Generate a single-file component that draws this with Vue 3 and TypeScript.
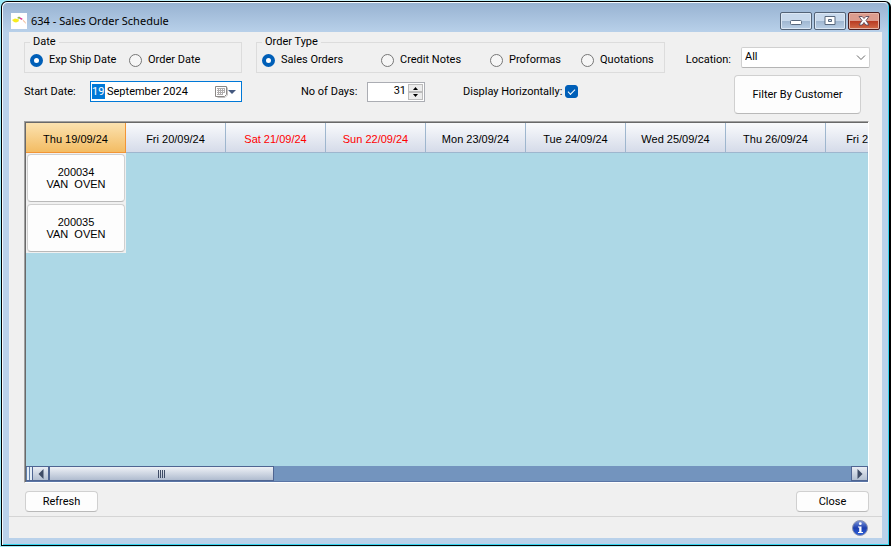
<script setup lang="ts">
import { computed, onBeforeUnmount, onMounted, ref } from 'vue'

interface Order {
  id: string
  customer: string
}

interface Day {
  label: string
  weekend: boolean
  orders: Order[]
}

const COLUMN = 100

const dateMode = ref('ship')
const orderType = ref('sales')
const location = ref('All')
const startDay = ref('19')
const startMonth = ref('September 2024')
const dayCount = ref(31)
const horizontal = ref(true)
const selected = ref('Thu 19/09/24')
const viewport = ref<HTMLElement | null>(null)
const columns = ref(9)
const first = ref(0)

const orderTypes = [
  { value: 'sales', label: 'Sales Orders' },
  { value: 'credit', label: 'Credit Notes' },
  { value: 'proforma', label: 'Proformas' },
  { value: 'quote', label: 'Quotations' },
]

const names = ['Sun', 'Mon', 'Tue', 'Wed', 'Thu', 'Fri', 'Sat']
const pad = (n: number) => String(n).padStart(2, '0')

const days = computed<Day[]>(() =>
  Array.from({ length: dayCount.value }, (_, i) => {
    const d = new Date(2024, 8, 19 + i)
    return {
      label: `${names[d.getDay()]} ${pad(d.getDate())}/${pad(d.getMonth() + 1)}/${pad(d.getFullYear() % 100)}`,
      weekend: d.getDay() === 0 || d.getDay() === 6,
      orders:
        i === 0
          ? [
              { id: '200034', customer: 'VAN  OVEN' },
              { id: '200035', customer: 'VAN  OVEN' },
            ]
          : [],
    }
  }),
)

// Only the columns that fit the viewport are rendered.
const visible = computed(() => days.value.slice(first.value, first.value + columns.value))

const thumb = computed(() => {
  const total = dayCount.value + 1
  return {
    width: Math.min(100, Math.round((columns.value / total) * 100)) + '%',
    marginLeft: Math.round((first.value / total) * 100) + '%',
  }
})

function step(n: number) {
  dayCount.value = Math.max(1, dayCount.value + n)
}

function scroll(n: number) {
  const last = Math.max(0, dayCount.value - columns.value + 1)
  first.value = Math.min(last, Math.max(0, first.value + n))
}

let observer: ResizeObserver | undefined

onMounted(() => {
  observer = new ResizeObserver(() => {
    if (viewport.value) columns.value = Math.ceil(viewport.value.clientWidth / COLUMN)
  })
  if (viewport.value) observer.observe(viewport.value)
})

onBeforeUnmount(() => observer?.disconnect())
</script>

<template>
  <div class="desktop">
    <div class="window">
      <header class="titlebar">
        <svg class="logo" width="16" height="16" viewBox="0 0 16 16" aria-hidden="true">
          <rect width="16" height="16" fill="#fff" />
          <path d="M1 7L4 5.500 6 6l2 .5-.5 2L5 9.500 3 9z" fill="#f6ec1e" />
          <path d="M6 5l2-1.500 1.500 1-1 1.500z" fill="#8fb44e" />
          <path d="M9 4.500l2.500 1-.5 1.500-2-1z" fill="#e0389a" />
          <path d="M11.500 6l3 3 .5 2-3-3z" fill="#f3c2a2" />
        </svg>
        <h1>634 - Sales Order Schedule</h1>
        <div class="caption-buttons">
          <button type="button" aria-label="Minimize">
            <svg width="12" height="12" viewBox="0 0 12 12"><rect x=".5" y="5.500" width="11" height="4" rx="1" fill="#fff" stroke="#58687d" /></svg>
          </button>
          <button type="button" aria-label="Maximize">
            <svg width="12" height="12" viewBox="0 0 12 12"><path d="M1 1.500h10v8H1zM4.500 4.500h3v2h-3z" fill="#fff" fill-rule="evenodd" stroke="#58687d" /></svg>
          </button>
          <button type="button" class="shut" aria-label="Close window">
            <svg width="12" height="12" viewBox="0 0 12 12"><path d="M1 1.500h3.200L6 3.500l1.800-2H11L8 5.500l3 4.500H7.800L6 7.500 4.200 10H1l3-4.500z" fill="#fff" stroke="#58485a" stroke-width=".9" /></svg>
          </button>
        </div>
      </header>

      <main class="client">
        <section class="controls">
          <div class="options">
            <div class="groups">
              <fieldset class="date-group">
                <legend>Date</legend>
                <div class="radios two">
                  <label><input v-model="dateMode" type="radio" name="mode" value="ship" />Exp Ship Date</label>
                  <label><input v-model="dateMode" type="radio" name="mode" value="order" />Order Date</label>
                </div>
              </fieldset>
              <fieldset class="type-group">
                <legend>Order Type</legend>
                <div class="radios four">
                  <label v-for="t in orderTypes" :key="t.value">
                    <input v-model="orderType" type="radio" name="type" :value="t.value" />{{ t.label }}
                  </label>
                </div>
              </fieldset>
            </div>

            <div class="fields">
              <label class="start-label" for="start-day">Start Date:</label>
              <div class="datebox">
                <input id="start-day" v-model="startDay" class="day" type="text" />
                <input v-model="startMonth" class="month" type="text" aria-label="Start month" />
                <button type="button" aria-label="Open calendar">
                  <svg width="22" height="14" viewBox="0 0 22 14">
                    <path d="M2.500 12.500h7.500l2.500-2.500V2.500" fill="none" stroke="#c4c2c2" />
                    <path d="M.5 1.500h11v8l-2 2h-9z" fill="#fff" stroke="#8b8886" />
                    <path d="M2 3.500h8M2 5.500h8M2 7.500h8M2 9.500h6M3.500 3v7M5.500 3v7M7.500 3v7M9.500 3v5" stroke="#b0adad" fill="none" />
                    <path d="M13 5h8l-4 4z" fill="#44597f" />
                  </svg>
                </button>
              </div>
              <label class="days-label" for="days">No of Days:</label>
              <div class="spinbox">
                <input id="days" v-model.number="dayCount" type="text" />
                <div class="spin">
                  <button type="button" aria-label="More days" @click="step(1)">
                    <svg width="7" height="4" viewBox="0 0 7 4"><path d="M1 4l2.500-3L6 4z" fill="#000" /></svg>
                  </button>
                  <button type="button" aria-label="Fewer days" @click="step(-1)">
                    <svg width="7" height="4" viewBox="0 0 7 4"><path d="M1 0l2.500 3L6 0z" fill="#000" /></svg>
                  </button>
                </div>
              </div>
              <label class="check"><span>Display Horizontally:</span><input v-model="horizontal" type="checkbox" /></label>
            </div>
          </div>

          <div class="filters">
            <div class="location">
              <label for="location">Location:</label>
              <div class="select">
                <select id="location" v-model="location">
                  <option>All</option>
                </select>
                <svg width="10" height="6" viewBox="0 0 10 6" aria-hidden="true"><path d="M1 .5L5 4.500 9 .5" fill="none" stroke="#666" /></svg>
              </div>
            </div>
            <button type="button" class="button filter">Filter By Customer</button>
          </div>
        </section>

        <section class="schedule">
          <div ref="viewport" class="viewport">
            <table>
              <thead>
                <tr>
                  <th
                    v-for="d in visible"
                    :key="d.label"
                    :class="{ weekend: d.weekend, active: d.label === selected }"
                    @click="selected = d.label"
                  >
                    {{ d.label }}
                  </th>
                </tr>
              </thead>
              <tbody>
                <tr>
                  <td v-for="d in visible" :key="d.label">
                    <div v-for="o in d.orders" :key="o.id" class="slot">
                      <button type="button" class="button order">{{ o.id }}<br />{{ o.customer }}</button>
                    </div>
                  </td>
                </tr>
              </tbody>
            </table>
          </div>
          <div class="scrollbar">
            <span class="splitter"></span>
            <button type="button" aria-label="Scroll left" @click="scroll(-1)">
              <svg width="6" height="10" viewBox="0 0 6 10"><path d="M5.500 0v10L.5 5z" fill="#3f4c66" /></svg>
            </button>
            <div class="track">
              <div class="thumb" :style="thumb"><i></i><i></i><i></i><i></i></div>
            </div>
            <button type="button" aria-label="Scroll right" @click="scroll(1)">
              <svg width="6" height="10" viewBox="0 0 6 10"><path d="M.5 0v10l5-5z" fill="#3f4c66" /></svg>
            </button>
          </div>
        </section>

        <div class="actions">
          <button type="button" class="button">Refresh</button>
          <button type="button" class="button">Close</button>
        </div>

        <footer class="status">
          <svg width="16" height="16" viewBox="0 0 16 16" role="img" aria-label="Information">
            <defs>
              <linearGradient id="info" x1="0" y1="0" x2="0" y2="1">
                <stop offset="0" stop-color="#7f98dc" />
                <stop offset=".5" stop-color="#1d3fae" />
                <stop offset="1" stop-color="#2f62dd" />
              </linearGradient>
            </defs>
            <circle cx="8" cy="8" r="7.500" fill="url(#info)" stroke="#8b93ad" />
            <circle cx="8.300" cy="3.700" r="1.400" fill="#fff" />
            <path d="M6 6.500h3.500v5.500H11V13H6v-1h1.200V7.500H6z" fill="#fff" />
          </svg>
        </footer>
      </main>
    </div>
  </div>
</template>

<style>
body {
  margin: 0;
}
</style>

<style scoped>
* {
  box-sizing: border-box;
}

.desktop {
  height: 100vh;
  padding: 1px 0 1px 1px;
  background: linear-gradient(90deg, #9beaf8, #d8f6fb 30%, #b5eef8 60%, #e6fafc);
  font: 11px/14px Roboto, 'Liberation Sans', Arial, sans-serif;
  color: #000;
}

.window {
  display: flex;
  flex-direction: column;
  height: 100%;
  border: solid #000;
  border-width: 1px 2px 1px 1px;
  border-radius: 6px 6px 0 0;
  background: #b9d1ea;
  box-shadow: inset 1px 1px #f4f9fd, inset -1px -1px #35d3ee;
  padding: 0 7px 7px;
}

.titlebar {
  display: flex;
  align-items: center;
  gap: 4px;
  height: 30px;
  flex: none;
  margin: 1px -6px -1px;
  padding: 5px 8px 0;
  background: linear-gradient(#98b3d2, #b9d1ea);
  border-radius: 5px 5px 0 0;
}

h1 {
  margin: 0;
  font: 11px/16px 'Noto Sans', sans-serif;
}

.caption-buttons {
  display: flex;
  gap: 2px;
  margin-left: auto;
}

.caption-buttons button {
  display: flex;
  align-items: center;
  justify-content: center;
  width: 32px;
  height: 18px;
  padding: 0;
  border: 1px solid #536377;
  border-radius: 2px;
  background: linear-gradient(#c8d9ec 50%, #9fb6d0 50%, #b9cfe6);
  box-shadow: inset 0 0 0 1px #dbe7f4;
}

.caption-buttons .shut {
  border-color: #4a1e20;
  background: linear-gradient(#dc9c8e 50%, #b83a22 50%, #d26c4a);
  box-shadow: inset 0 0 0 1px #e6b6a8;
}

.client {
  display: flex;
  flex-direction: column;
  flex: 1;
  min-height: 0;
  background: #f0f0f0;
}

.controls {
  display: flex;
  justify-content: space-between;
  padding: 3px 12px 0 15px;
  height: 89px;
  flex: none;
}

.groups {
  display: flex;
  gap: 14px;
}

fieldset {
  margin: 0;
  padding: 0 5px;
  border: 1px solid #dcdcdc;
  height: 38px;
  min-width: 0;
}

.date-group {
  width: 218px;
}

.type-group {
  width: 409px;
}

legend {
  padding: 0 3px;
}

.radios {
  display: grid;
  padding-top: 4px;
}

.two {
  grid-template-columns: 99px auto;
}

.four {
  grid-template-columns: 119px 109px 91px auto;
}

.radios label {
  display: flex;
  align-items: center;
  gap: 6px;
  white-space: nowrap;
}

input[type='radio'] {
  appearance: none;
  flex: none;
  width: 13px;
  height: 13px;
  margin: 0;
  border: 1px solid #767676;
  border-radius: 50%;
  background: #f6f6f6;
}

input[type='radio']:checked {
  border: 4px solid #005fb8;
  background: #fff;
}

.fields {
  display: flex;
  align-items: center;
  margin-top: 8px;
  height: 21px;
  white-space: nowrap;
}

.start-label {
  width: 66px;
}

.datebox {
  display: flex;
  align-items: center;
  width: 152px;
  height: 21px;
  padding: 0 4px 0 1px;
  border: 1px solid #0078d7;
  background: #fff;
}

.datebox input {
  border: 0;
  padding: 0;
  height: 15px;
  font: inherit;
  min-width: 0;
}

.datebox .day {
  width: 13px;
  background: #0078d7;
  color: #fff;
}

.datebox .month {
  flex: 1;
  padding-left: 2px;
}

.datebox button {
  padding: 0;
  border: 0;
  background: none;
  display: flex;
}

.days-label {
  width: 66px;
  margin-left: 59px;
}

.spinbox {
  display: flex;
  width: 58px;
  height: 20px;
  padding: 1px;
  border: 1px solid #abadb3;
  background: #fff;
}

.spinbox input {
  flex: 1;
  min-width: 0;
  padding: 0 2px 2px 0;
  border: 0;
  font: inherit;
  text-align: right;
}

.spin {
  display: grid;
  width: 15px;
}

.spin button {
  display: flex;
  align-items: center;
  justify-content: center;
  padding: 0;
  border: 1px solid #bcbcbc;
  background: #ececec;
}

.check {
  display: flex;
  align-items: center;
  margin-left: 38px;
}

.check span {
  width: 102px;
}

.check input {
  appearance: none;
  width: 13px;
  height: 13px;
  margin: 0;
  border: 1px solid #767676;
  border-radius: 3px;
  background: #fff;
  display: grid;
  place-items: center;
}

.check input:checked {
  border-color: #005fb8;
  background: #005fb8;
}

.check input:checked::after {
  content: '';
  width: 6px;
  height: 3px;
  border: solid #fff;
  border-width: 0 0 1px 1px;
  transform: rotate(-45deg);
  margin-bottom: 2px;
}

.filters {
  display: flex;
  flex-direction: column;
  align-items: flex-end;
  gap: 7px;
  padding-top: 12px;
}

.location {
  display: flex;
  align-items: center;
  gap: 10px;
}

.location label {
  padding-top: 4px;
}

.select {
  display: grid;
  align-items: center;
  width: 129px;
  height: 21px;
}

.select > * {
  grid-area: 1 / 1;
}

.select svg {
  justify-self: end;
  margin-right: 4px;
  pointer-events: none;
}

select {
  appearance: none;
  width: 100%;
  height: 100%;
  padding: 0 18px 1px 3px;
  border: 1px solid #d0d0d0;
  border-bottom-color: #b4b4b4;
  border-radius: 2px;
  background: #fff;
  font: inherit;
  color: inherit;
}

.button {
  padding: 0;
  border: 1px solid #d0d0d0;
  border-bottom-color: #b9b9b9;
  border-radius: 4px;
  background: #fdfdfd;
  font: inherit;
  color: inherit;
}

.filter {
  width: 127px;
  height: 39px;
  margin-right: 9px;
}

.schedule {
  display: flex;
  flex-direction: column;
  flex: 1;
  min-height: 0;
  margin: 0 13px 0 15px;
  padding: 1px 0 0 1px;
  border: 1px solid;
  border-color: #a0a0a0 #fff #fff #a0a0a0;
  box-shadow: inset 1px 1px #696969;
  background: #add8e6;
}

.viewport {
  flex: 1;
  min-height: 0;
  overflow: hidden;
}

table {
  border-collapse: separate;
  border-spacing: 0;
  table-layout: fixed;
  width: max-content;
  font: 11px/12px 'Liberation Sans', Arial, sans-serif;
}

th {
  width: 100px;
  min-width: 100px;
  height: 30px;
  padding: 2px 0 0;
  border: solid #9eb6ce;
  border-width: 0 1px 1px 0;
  background: linear-gradient(#f9fafc, #d5dbe9);
  font-weight: normal;
}

th.weekend {
  color: #f00;
}

th.active {
  border-color: #f29536;
  background: linear-gradient(#fbe2b0, #f3bc63);
}

td {
  padding: 0;
  vertical-align: top;
}

.slot {
  height: 50px;
  padding: 1px;
  background: #f0f0f0;
}

.order {
  width: 100%;
  height: 100%;
  white-space: pre;
}

.scrollbar {
  display: flex;
  height: 16px;
  flex: none;
  background: #7394be;
  border-bottom: 1px solid #5a75a5;
}

.splitter {
  flex: none;
  width: 6px;
  border: solid #4f6592;
  border-width: 1px 0;
  background: linear-gradient(90deg, #5f80ac 1px, #e4edf6 1px 3px, #5f80ac 3px 4px, #e4edf6 4px);
}

.scrollbar button {
  display: flex;
  align-items: center;
  justify-content: center;
  flex: none;
  width: 17px;
  padding: 0;
  border: 1px solid #4f6592;
  background: linear-gradient(#e9edf4, #b3bfd1);
}

.track {
  flex: 1;
}

.thumb {
  display: flex;
  align-items: center;
  justify-content: center;
  gap: 1px;
  height: 100%;
  border: 1px solid #4f6592;
  background: linear-gradient(#eef1f6, #b0bccf);
}

.thumb i {
  width: 1px;
  height: 8px;
  background: #3f4c66;
}

.actions {
  display: flex;
  justify-content: space-between;
  padding: 8px 13px 4px 16px;
}

.actions .button {
  width: 73px;
  height: 21px;
}

.status {
  display: flex;
  align-items: center;
  justify-content: flex-end;
  height: 22px;
  flex: none;
  padding-right: 14px;
  border-top: 1px solid #d5d5d5;
}
</style>
